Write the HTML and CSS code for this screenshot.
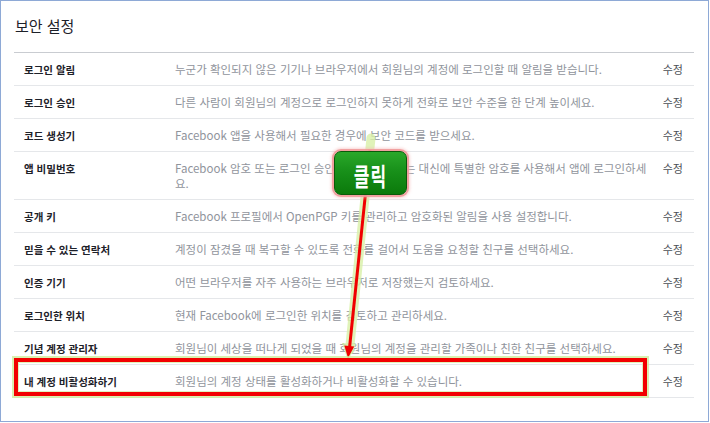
FILE: index.html
```html
<!DOCTYPE html>
<html lang="ko">
<head>
<meta charset="utf-8">
<link rel="stylesheet" href="styles.css">
</head>
<body>
<div class="frame">
  <div class="panel">
    <div class="title">보안 설정</div>
    <div class="row">
      <div class="label">로그인 알림</div>
      <div class="desc">누군가 확인되지 않은 기기나 브라우저에서 회원님의 계정에 로그인할 때 알림을 받습니다.</div>
      <div class="edit">수정</div>
    </div>
    <div class="row">
      <div class="label">로그인 승인</div>
      <div class="desc">다른 사람이 회원님의 계정으로 로그인하지 못하게 전화로 보안 수준을 한 단계 높이세요.</div>
      <div class="edit">수정</div>
    </div>
    <div class="row">
      <div class="label">코드 생성기</div>
      <div class="desc">Facebook 앱을 사용해서 필요한 경우에 보안 코드를 받으세요.</div>
      <div class="edit">수정</div>
    </div>
    <div class="row">
      <div class="label">앱 비밀번호</div>
      <div class="desc">Facebook 암호 또는 로그인 승인 코드를 사용하는 대신에 특별한 암호를 사용해서 앱에 로그인하세요.</div>
      <div class="edit">수정</div>
    </div>
    <div class="row">
      <div class="label">공개 키</div>
      <div class="desc">Facebook 프로필에서 OpenPGP 키를 관리하고 암호화된 알림을 사용 설정합니다.</div>
      <div class="edit">수정</div>
    </div>
    <div class="row">
      <div class="label">믿을 수 있는 연락처</div>
      <div class="desc">계정이 잠겼을 때 복구할 수 있도록 전화를 걸어서 도움을 요청할 친구를 선택하세요.</div>
      <div class="edit">수정</div>
    </div>
    <div class="row">
      <div class="label">인증 기기</div>
      <div class="desc">어떤 브라우저를 자주 사용하는 브라우저로 저장했는지 검토하세요.</div>
      <div class="edit">수정</div>
    </div>
    <div class="row">
      <div class="label">로그인한 위치</div>
      <div class="desc">현재 Facebook에 로그인한 위치를 검토하고 관리하세요.</div>
      <div class="edit">수정</div>
    </div>
    <div class="row">
      <div class="label">기념 계정 관리자</div>
      <div class="desc">회원님이 세상을 떠나게 되었을 때 회원님의 계정을 관리할 가족이나 친한 친구를 선택하세요.</div>
      <div class="edit">수정</div>
    </div>
    <div class="row">
      <div class="label">내 계정 비활성화하기</div>
      <div class="desc">회원님의 계정 상태를 활성화하거나 비활성화할 수 있습니다.</div>
      <div class="edit">수정</div>
    </div>
  </div>

  <svg class="arrow" width="709" height="422" viewBox="0 0 709 422">
    <line x1="371" y1="138" x2="349.5" y2="350" stroke="#d8f0a8" stroke-opacity="0.8" stroke-width="9" stroke-linecap="round"/>
    <polygon points="348,361 356,344 342,343" fill="#d8f0a8" fill-opacity="0.8"/>
    <line x1="370" y1="150" x2="349.5" y2="348" stroke="#f00000" stroke-width="3"/>
    <polygon points="348,358 354.2,346.6 344.3,345.6" fill="#f00000"/>
  </svg>

  <div class="highlight"></div>

  <div class="callout"><span class="callout-text">클릭</span></div>
</div>
</body>
</html>
```

FILE: styles.css
```css
html, body {
  margin: 0;
  padding: 0;
  background: #ffffff;
}

.frame {
  position: relative;
  box-sizing: border-box;
  width: 709px;
  height: 422px;
  border: 1px solid #8ea9d6;
  background: #ffffff;
  padding: 0 14px 0 13px;
  font-family: "Noto Sans CJK KR", "Noto Sans", sans-serif;
}

.panel {
  display: flex;
  flex-direction: column;
}

.title {
  padding: 15px 0 16px 1px;
  line-height: 20px;
  font-size: 15px;
  color: #1d2129;
  border-bottom: 1px solid #c9ccd1;
}

.row {
  display: flex;
  align-items: flex-start;
  padding: 9px 0 8px;
  border-bottom: 1px solid #e5e7ea;
  line-height: 15px;
}

.label {
  flex: 0 0 151px;
  padding-left: 10px;
  font-size: 10.5px;
  font-weight: bold;
  color: #1d2129;
}

.desc {
  flex: 1;
  font-size: 11.5px;
  color: #90949c;
  padding-right: 14px;
}

.edit {
  flex: 0 0 auto;
  padding-right: 11px;
  font-size: 11px;
  color: #4b4f56;
}

.arrow {
  position: absolute;
  left: -1px;
  top: -1px;
  pointer-events: none;
}

.highlight {
  position: absolute;
  left: 13px;
  top: 357px;
  width: 633px;
  height: 38px;
  box-sizing: border-box;
  border: 4px solid #f20000;
  box-shadow: 0 0 0 2px rgba(205, 235, 150, 0.75), inset 0 0 0 1px rgba(215, 240, 170, 0.8);
}

.callout {
  position: absolute;
  left: 333px;
  top: 150px;
  width: 73px;
  height: 44px;
  box-sizing: border-box;
  border: 1px solid #0a5a0a;
  border-radius: 7px;
  background: linear-gradient(to bottom, #2aa82a 0%, #18901a 45%, #0b7a0b 100%);
  box-shadow: 0 0 0 2px rgba(240, 150, 150, 0.85), 0 0 3px 3px rgba(245, 185, 185, 0.6);
  display: flex;
  align-items: center;
  justify-content: center;
}

.callout-text {
  display: inline-block;
  color: #ffffff;
  font-size: 17px;
  font-weight: bold;
  letter-spacing: 1px;
  transform: scaleY(1.5);
  margin-top: 2px;
}
```
